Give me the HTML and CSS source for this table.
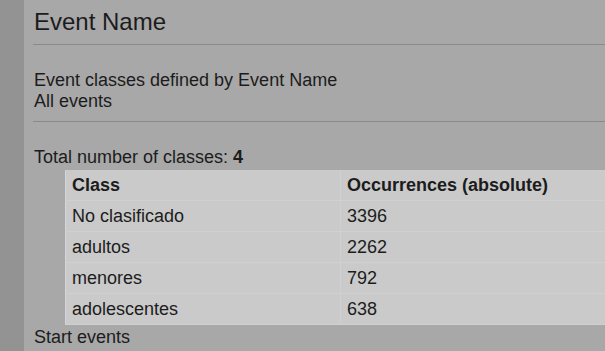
FILE: index.html
```html
<!DOCTYPE html>
<html>
<head>
<meta charset="utf-8">
<link rel="stylesheet" href="styles.css">
</head>
<body>
<div class="layout">
  <aside class="sidebar"></aside>
  <main class="content">
    <h1 class="title">Event Name</h1>
    <div class="rule"></div>
    <p class="desc">Event classes defined by Event Name<br>All events</p>
    <div class="rule"></div>
    <p class="total">Total number of classes: <b>4</b></p>
    <table class="classes">
      <thead>
        <tr><th class="c1">Class</th><th>Occurrences (absolute)</th></tr>
      </thead>
      <tbody>
        <tr><td class="c1">No clasificado</td><td>3396</td></tr>
        <tr><td class="c1">adultos</td><td>2262</td></tr>
        <tr><td class="c1">menores</td><td>792</td></tr>
        <tr><td class="c1">adolescentes</td><td>638</td></tr>
      </tbody>
    </table>
    <p class="start">Start events</p>
  </main>
</div>
</body>
</html>
```
FILE: styles.css
```css
html, body {
  margin: 0;
  padding: 0;
  height: 100%;
  overflow: hidden;
  background: #a8a8a8;
}
body {
  font-family: "Liberation Sans", Arial, sans-serif;
  color: #1c1c1c;
}
.layout {
  display: flex;
  height: 100%;
}
.sidebar {
  width: 24px;
  flex: none;
  background: #939393;
}
.content {
  flex: 1;
  padding-left: 10px;
  min-width: 0;
  overflow: hidden;
}
.title {
  margin: 8px 0 0;
  font-size: 24px;
  font-weight: normal;
  line-height: 27px;
}
.rule {
  height: 1px;
  background: #8a8a8a;
  margin-top: 9px;
  margin-left: -1px;
}
.desc {
  margin: 25px 0 0;
  font-size: 18px;
  line-height: 21px;
}
.desc + .rule {
  margin-top: 9px;
}
.total {
  margin: 25px 0 0;
  font-size: 18px;
  line-height: 21px;
}
.total b {
  font-weight: bold;
}
.classes {
  margin: 2px 0 0 31px;
  border-collapse: collapse;
  width: 540px;
  background: #cacaca;
  border-left: 1px solid #d4d4dc;
  font-size: 18px;
}
.classes th, .classes td {
  height: 30px;
  padding: 0 6px;
  text-align: left;
  border-bottom: 1px solid #d0d0d0;
}
.classes th {
  font-weight: bold;
}
.classes .c1 {
  width: 262px;
  border-right: 1px solid #d0d0d4;
}
.start {
  margin: 2px 0 0;
  font-size: 18px;
  line-height: 21px;
}
```
